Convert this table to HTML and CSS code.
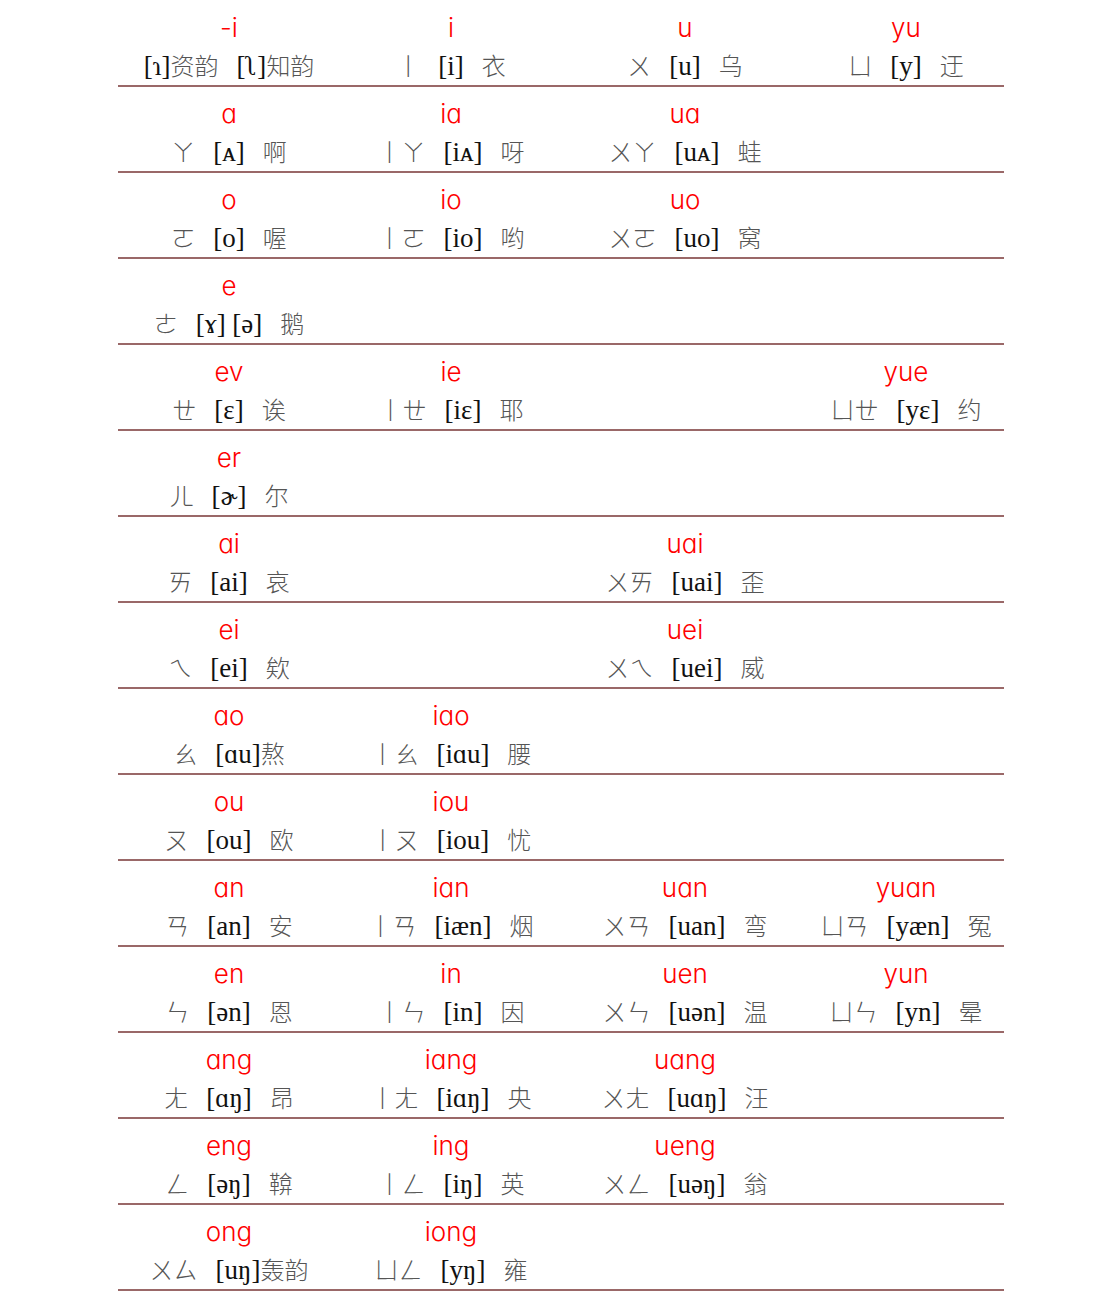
FILE: index.html
```html
<!DOCTYPE html>
<html lang="zh">
<head>
<meta charset="utf-8">
<title>韵母表</title>
<link rel="stylesheet" href="styles.css">
</head>
<body>
<div class="table">
  <div class="row">
    <div class="cell"><div class="py">-i</div><div class="sd"><span class="ipa">[ɿ]<span class="han">资韵</span></span><span class="ipa">[ʅ]<span class="han">知韵</span></span></div></div>
    <div class="cell"><div class="py">i</div><div class="sd"><span class="bpm">丨</span><span class="ipa">[i]</span><span class="han">衣</span></div></div>
    <div class="cell"><div class="py">u</div><div class="sd"><span class="bpm">ㄨ</span><span class="ipa">[u]</span><span class="han">乌</span></div></div>
    <div class="cell"><div class="py">yu</div><div class="sd"><span class="bpm">ㄩ</span><span class="ipa">[y]</span><span class="han">迂</span></div></div>
  </div>
  <div class="row">
    <div class="cell"><div class="py">a</div><div class="sd"><span class="bpm">ㄚ</span><span class="ipa">[ᴀ]</span><span class="han">啊</span></div></div>
    <div class="cell"><div class="py">ia</div><div class="sd"><span class="bpm">丨ㄚ</span><span class="ipa">[iᴀ]</span><span class="han">呀</span></div></div>
    <div class="cell"><div class="py">ua</div><div class="sd"><span class="bpm">ㄨㄚ</span><span class="ipa">[uᴀ]</span><span class="han">蛙</span></div></div>
    <div class="cell"></div>
  </div>
  <div class="row">
    <div class="cell"><div class="py">o</div><div class="sd"><span class="bpm">ㄛ</span><span class="ipa">[o]</span><span class="han">喔</span></div></div>
    <div class="cell"><div class="py">io</div><div class="sd"><span class="bpm">丨ㄛ</span><span class="ipa">[io]</span><span class="han">哟</span></div></div>
    <div class="cell"><div class="py">uo</div><div class="sd"><span class="bpm">ㄨㄛ</span><span class="ipa">[uo]</span><span class="han">窝</span></div></div>
    <div class="cell"></div>
  </div>
  <div class="row">
    <div class="cell"><div class="py">e</div><div class="sd"><span class="bpm">ㄜ</span><span class="ipa">[ɤ] [ə]</span><span class="han">鹅</span></div></div>
    <div class="cell"></div>
    <div class="cell"></div>
    <div class="cell"></div>
  </div>
  <div class="row">
    <div class="cell"><div class="py">ev</div><div class="sd"><span class="bpm">ㄝ</span><span class="ipa">[ε]</span><span class="han">诶</span></div></div>
    <div class="cell"><div class="py">ie</div><div class="sd"><span class="bpm">丨ㄝ</span><span class="ipa">[iε]</span><span class="han">耶</span></div></div>
    <div class="cell"></div>
    <div class="cell"><div class="py">yue</div><div class="sd"><span class="bpm">ㄩㄝ</span><span class="ipa">[yε]</span><span class="han">约</span></div></div>
  </div>
  <div class="row">
    <div class="cell"><div class="py">er</div><div class="sd"><span class="bpm">ㄦ</span><span class="ipa">[ɚ]</span><span class="han">尔</span></div></div>
    <div class="cell"></div>
    <div class="cell"></div>
    <div class="cell"></div>
  </div>
  <div class="row">
    <div class="cell"><div class="py">ai</div><div class="sd"><span class="bpm">ㄞ</span><span class="ipa">[ai]</span><span class="han">哀</span></div></div>
    <div class="cell"></div>
    <div class="cell"><div class="py">uai</div><div class="sd"><span class="bpm">ㄨㄞ</span><span class="ipa">[uai]</span><span class="han">歪</span></div></div>
    <div class="cell"></div>
  </div>
  <div class="row">
    <div class="cell"><div class="py">ei</div><div class="sd"><span class="bpm">ㄟ</span><span class="ipa">[ei]</span><span class="han">欸</span></div></div>
    <div class="cell"></div>
    <div class="cell"><div class="py">uei</div><div class="sd"><span class="bpm">ㄨㄟ</span><span class="ipa">[uei]</span><span class="han">威</span></div></div>
    <div class="cell"></div>
  </div>
  <div class="row">
    <div class="cell"><div class="py">ao</div><div class="sd"><span class="bpm">ㄠ</span><span class="ipa">[ɑu]<span class="han">熬</span></span></div></div>
    <div class="cell"><div class="py">iao</div><div class="sd"><span class="bpm">丨ㄠ</span><span class="ipa">[iɑu]</span><span class="han">腰</span></div></div>
    <div class="cell"></div>
    <div class="cell"></div>
  </div>
  <div class="row">
    <div class="cell"><div class="py">ou</div><div class="sd"><span class="bpm">ㄡ</span><span class="ipa">[ou]</span><span class="han">欧</span></div></div>
    <div class="cell"><div class="py">iou</div><div class="sd"><span class="bpm">丨ㄡ</span><span class="ipa">[iou]</span><span class="han">忧</span></div></div>
    <div class="cell"></div>
    <div class="cell"></div>
  </div>
  <div class="row">
    <div class="cell"><div class="py">an</div><div class="sd"><span class="bpm">ㄢ</span><span class="ipa">[an]</span><span class="han">安</span></div></div>
    <div class="cell"><div class="py">ian</div><div class="sd"><span class="bpm">丨ㄢ</span><span class="ipa">[iæn]</span><span class="han">烟</span></div></div>
    <div class="cell"><div class="py">uan</div><div class="sd"><span class="bpm">ㄨㄢ</span><span class="ipa">[uan]</span><span class="han">弯</span></div></div>
    <div class="cell"><div class="py">yuan</div><div class="sd"><span class="bpm">ㄩㄢ</span><span class="ipa">[yæn]</span><span class="han">冤</span></div></div>
  </div>
  <div class="row">
    <div class="cell"><div class="py">en</div><div class="sd"><span class="bpm">ㄣ</span><span class="ipa">[ən]</span><span class="han">恩</span></div></div>
    <div class="cell"><div class="py">in</div><div class="sd"><span class="bpm">丨ㄣ</span><span class="ipa">[in]</span><span class="han">因</span></div></div>
    <div class="cell"><div class="py">uen</div><div class="sd"><span class="bpm">ㄨㄣ</span><span class="ipa">[uən]</span><span class="han">温</span></div></div>
    <div class="cell"><div class="py">yun</div><div class="sd"><span class="bpm">ㄩㄣ</span><span class="ipa">[yn]</span><span class="han">晕</span></div></div>
  </div>
  <div class="row">
    <div class="cell"><div class="py">ang</div><div class="sd"><span class="bpm">ㄤ</span><span class="ipa">[ɑŋ]</span><span class="han">昂</span></div></div>
    <div class="cell"><div class="py">iang</div><div class="sd"><span class="bpm">丨ㄤ</span><span class="ipa">[iɑŋ]</span><span class="han">央</span></div></div>
    <div class="cell"><div class="py">uang</div><div class="sd"><span class="bpm">ㄨㄤ</span><span class="ipa">[uɑŋ]</span><span class="han">汪</span></div></div>
    <div class="cell"></div>
  </div>
  <div class="row">
    <div class="cell"><div class="py">eng</div><div class="sd"><span class="bpm">ㄥ</span><span class="ipa">[əŋ]</span><span class="han">鞥</span></div></div>
    <div class="cell"><div class="py">ing</div><div class="sd"><span class="bpm">丨ㄥ</span><span class="ipa">[iŋ]</span><span class="han">英</span></div></div>
    <div class="cell"><div class="py">ueng</div><div class="sd"><span class="bpm">ㄨㄥ</span><span class="ipa">[uəŋ]</span><span class="han">翁</span></div></div>
    <div class="cell"></div>
  </div>
  <div class="row">
    <div class="cell"><div class="py">ong</div><div class="sd"><span class="bpm">ㄨㄙ</span><span class="ipa">[uŋ]<span class="han">轰韵</span></span></div></div>
    <div class="cell"><div class="py">iong</div><div class="sd"><span class="bpm">ㄩㄥ</span><span class="ipa">[yŋ]</span><span class="han">雍</span></div></div>
    <div class="cell"></div>
    <div class="cell"></div>
  </div>
</div>
</body>
</html>
```

FILE: styles.css
```css
html, body {
  margin: 0;
  padding: 0;
  background: #ffffff;
}

body {
  padding: 1px 0 0 118px;
}

.table {
  width: 886px;
}

.row {
  display: grid;
  grid-template-columns: 222px 222px 246px 196px;
  height: 84px;
  border-bottom: 2px solid #9a6868;
}

.cell {
  display: flex;
  flex-direction: column;
  align-items: center;
  padding-top: 9px;
}

.py {
  font-family: Inter, "Noto Sans", sans-serif;
  font-feature-settings: "cv11" 1;
  font-weight: 300;
  font-size: 26px;
  line-height: 36px;
  height: 36px;
  color: #ff0000;
  white-space: nowrap;
}

.sd {
  display: flex;
  align-items: baseline;
  gap: 18px;
  height: 38px;
  line-height: 38px;
  white-space: nowrap;
}

.bpm,
.han {
  font-family: "Noto Sans CJK SC", "Noto Sans CJK TC", sans-serif;
  font-weight: 300;
  font-size: 24px;
  color: #555555;
}

.ipa {
  font-family: "Liberation Serif", "DejaVu Serif", serif;
  font-size: 27px;
  color: #111111;
}
```
